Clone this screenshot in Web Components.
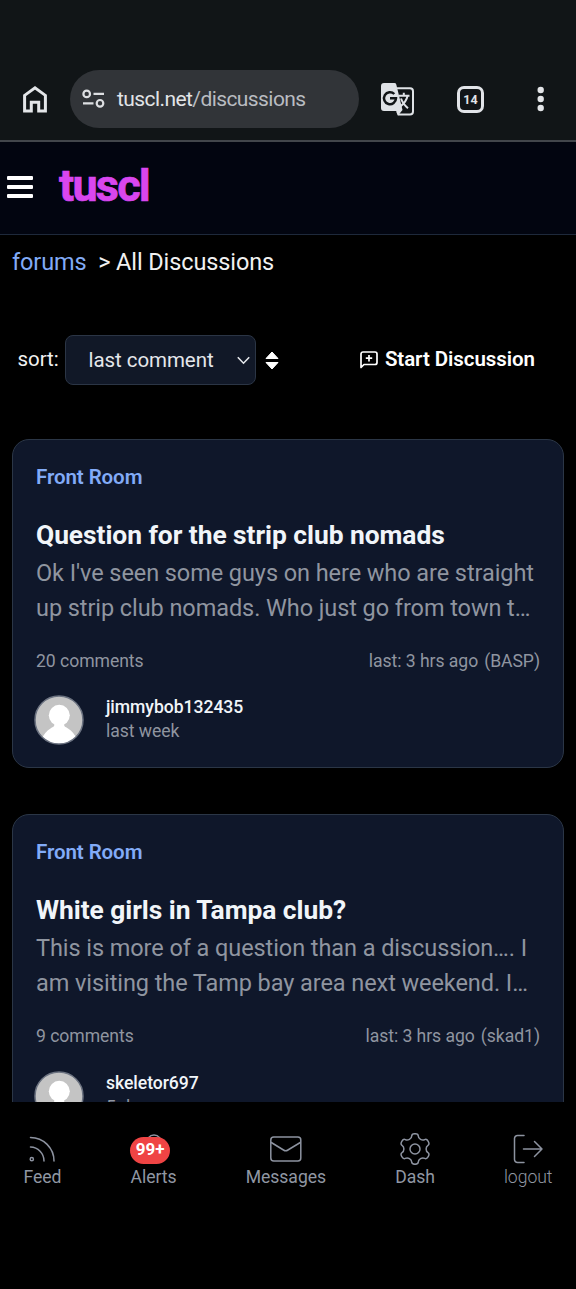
<!DOCTYPE html>
<html lang="en">
<head>
<meta charset="utf-8">
<title>All Discussions</title>
<style>
html,body{margin:0;padding:0;background:#000}
body{width:576px;height:1289px;overflow:hidden;font-family:Roboto,"Liberation Sans",sans-serif}
</style>
</head>
<body>
<phone-screen>
  <browser-bar slot="top"></browser-bar>
  <site-header slot="top"></site-header>
  <bread-crumb></bread-crumb>
  <list-toolbar></list-toolbar>
  <discussion-card>
    <span slot="room">Front Room</span>
    <span slot="title">Question for the strip club nomads</span>
    <span slot="line1">Ok I've seen some guys on here who are straight</span>
    <span slot="line2">up strip club nomads. Who just go from town t…</span>
    <span slot="count">20 comments</span>
    <span slot="last">last: 3 hrs ago</span>
    <span slot="by">(BASP)</span>
    <span slot="author">jimmybob132435</span>
    <span slot="when">last week</span>
  </discussion-card>
  <discussion-card>
    <span slot="room">Front Room</span>
    <span slot="title">White girls in Tampa club?</span>
    <span slot="line1">This is more of a question than a discussion…. I</span>
    <span slot="line2">am visiting the Tamp bay area next weekend. I…</span>
    <span slot="count">9 comments</span>
    <span slot="last">last: 3 hrs ago</span>
    <span slot="by">(skad1)</span>
    <span slot="author">skeletor697</span>
    <span slot="when">5 days ago</span>
  </discussion-card>
  <bottom-nav slot="bottom"></bottom-nav>
</phone-screen>
<script>
const define = (name, html) => customElements.define(name, class extends HTMLElement {
  constructor() {
    super();
    this.attachShadow({mode: 'open'}).innerHTML = html;
  }
});

define('phone-screen', `
<style>
:host{display:flex;flex-direction:column;width:576px;height:1289px;overflow:hidden;background:#000}
main{height:867px;flex:none;overflow:hidden}
</style>
<slot name="top"></slot><main><slot></slot></main><slot name="bottom"></slot>`);

define('browser-bar', `
<style>
:host{display:flex;flex:none;box-sizing:border-box;height:142px;padding:70px 0 12px 23px;align-items:center;background:#111517;border-bottom:2px solid #42464b}
svg{display:block;flex:none}
.pill{display:flex;align-items:center;box-sizing:border-box;width:289px;height:58px;margin-left:23px;padding-left:12px;border-radius:29px;background:#313438}
.url{margin-left:12px;font-size:21px;line-height:30px;letter-spacing:-.58px;color:#e2e4e7;white-space:nowrap}
.url span{color:#b9bcc1}
.tabs{display:flex;align-items:center;justify-content:center;box-sizing:border-box;width:27px;height:27px;margin-left:43px;border:3px solid #e2e4e8;border-radius:7px;color:#e2e4e8;font-size:12.5px;font-weight:700}
</style>
<svg width="24" height="27" viewBox="0 0 24 27" fill="none" stroke="#e3e5e8" stroke-width="3"><path d="M1.6 9.4V25H8.3V16.2H15.7V25H22.4V9.4L12 1.9Z"/></svg>
<div class="pill">
<svg width="23" height="20" viewBox="0 0 23 20" fill="none" stroke="#dddfe2" stroke-width="2.2"><circle cx="4.7" cy="4.9" r="3.3"/><path d="M11.5 4.9H22M1 14.3H11.5"/><circle cx="18" cy="14.3" r="3.3"/></svg>
<div class="url">tuscl.net<span>/discussions</span></div>
</div>
<svg style="margin-left:22px" width="33" height="33" viewBox="0 0 33 33">
<path d="M16 5.3H29a3 3 0 0 1 3 3V28.500a3 3 0 0 1-3 3H17.500L16 28" fill="none" stroke="#dfe2e6" stroke-width="2"/>
<path d="M3 0H13.400a2 2 0 0 1 1.900 1.400L21.500 27 17 32.500 15.700 28H3a3 3 0 0 1-3-3V3a3 3 0 0 1 3-3Z" fill="#dfe2e6"/>
<path d="M13.300 11A6 6 0 1 0 15 15.200H9" fill="none" stroke="#111517" stroke-width="2.500"/>
<path d="M18 12.800H28.500M22.800 9.800V12.800M26.500 13C25.500 18 22.500 21 19.300 23.500M20 15.500C21.500 20 24 22.700 27 25.200" fill="none" stroke="#dfe2e6" stroke-width="2"/></svg>
<div class="tabs">14</div>
<svg style="margin-left:53px" width="8" height="26" viewBox="0 0 8 26" fill="#e3e5e8"><circle cx="3.700" cy="4" r="3.200"/><circle cx="3.700" cy="13" r="3.200"/><circle cx="3.700" cy="22" r="3.200"/></svg>`);

define('site-header', `
<style>
:host{display:flex;flex:none;box-sizing:border-box;height:93px;padding-left:7px;align-items:center;background:#020510;border-bottom:1px solid #1e293b}
.menu{display:grid;gap:5px;width:26px;margin-top:-2px}
.menu i{height:4px;border-radius:1px;background:#fff}
b{margin:-4px 0 0 26px;font-size:45px;line-height:60px;font-weight:700;letter-spacing:-1.800px;color:#d946ef;-webkit-text-stroke:.7px #d946ef}
</style>
<div class="menu"><i></i><i></i><i></i></div><b>tuscl</b>`);

define('bread-crumb', `
<style>
:host{display:flex;height:55px;padding-left:12px;font-size:23.500px;line-height:54px;letter-spacing:-.1px;color:#f1f1f1;white-space:pre}
a{color:#82abf7;margin-right:11.500px}
</style>
<a>forums</a><span>&gt; All Discussions</span>`);

define('list-toolbar', `
<style>
:host{display:flex;align-items:center;height:50px;margin-top:45px;padding:0 41px 0 18px;font-size:20.500px;letter-spacing:-.06px;color:#f1f1f1;white-space:nowrap}
.select{display:flex;align-items:center;justify-content:space-between;box-sizing:border-box;width:191px;height:50px;margin-left:.5px;padding:0 5px 0 22.500px;border:1px solid #2b3545;border-radius:8px;background:#111827;color:#e5e7eb}
.lbl{margin-top:-2px;width:47px;margin-left:-.5px}
.sort{margin-left:9px}
.start{display:flex;align-items:center;margin-left:auto;font-weight:600;color:#fff;margin-top:-1px}
.start svg{margin:1px 6.500px 0 0}
.start span{margin-top:-1px}
</style>
<span class="lbl">sort:</span>
<div class="select"><span>last comment</span><svg width="13" height="9" viewBox="0 0 13 9" fill="none" stroke="#e5e7eb" stroke-width="1.600"><path d="M.8 1.200 6.500 7.200 12.200 1.200"/></svg></div>
<svg class="sort" width="14" height="19" viewBox="0 0 14 19" fill="#fff" stroke="#fff" stroke-width="1" stroke-linejoin="round"><path d="M1 7.500 7 1 13 7.500ZM1 11.500 7 18 13 11.500Z"/></svg>
<div class="start"><svg width="18" height="18" viewBox="0 0 18 18" fill="none" stroke="#fff" stroke-width="1.700" stroke-linejoin="round"><path d="M1 16.500V3a2 2 0 0 1 2-2H15a2 2 0 0 1 2 2V11.500a2 2 0 0 1-2 2H4ZM9 4V10.400M5.800 7.200H12.200"/></svg><span>Start Discussion</span></div>`);

define('discussion-card', `
<style>
:host{display:block;box-sizing:border-box;width:552px;height:329px;margin:54px 12px 46px;padding:23px 23px 22px;border:1px solid #2b3646;border-radius:17px;background:#0f172a;white-space:nowrap}
:host(:last-of-type){margin-top:0}
.room{font-size:20.500px;line-height:28px;font-weight:600;letter-spacing:-.08px;color:#82abf7}
.title{margin-top:25px;font-size:26.400px;line-height:38px;font-weight:700;letter-spacing:-.055px;color:#f1f5f9}
.text{margin-top:2px;font-size:23.500px;line-height:35px;letter-spacing:-.075px;color:#8f95a0}
.text div{height:35px}
.meta{display:flex;justify-content:space-between;margin-top:21px;font-size:17.600px;line-height:28px;letter-spacing:-.05px;color:#8f95a0}
.meta div{display:flex;gap:6px}
.user{display:flex;margin:20px 0 0 -2px;gap:22px;font-size:17.600px;line-height:24px;letter-spacing:-.05px;color:#8f95a0}
.name{font-weight:500;color:#f1f5f9}
svg{display:block}
.who{margin-top:-.2px}
:host(:last-of-type) .who{margin-top:.5px}
:host(:last-of-type) svg{margin-top:.5px}
</style>
<div class="room"><slot name="room"></slot></div>
<div class="title"><slot name="title"></slot></div>
<div class="text"><div><slot name="line1"></slot></div><div><slot name="line2"></slot></div></div>
<div class="meta"><slot name="count"></slot><div><slot name="last"></slot><slot name="by"></slot></div></div>
<div class="user">
<svg width="50" height="50" viewBox="0 0 50 50"><clipPath id="c"><circle cx="25" cy="25" r="24"/></clipPath><circle cx="25" cy="25" r="24" fill="#c4c4c4"/><g clip-path="url(#c)" fill="#fff"><circle cx="25.300" cy="20.300" r="10.500"/><path d="M20.500 28H30C30 32 31 31.500 34 33.500 38 36 41 39.500 42.500 44V50H8V44C9.500 39.500 12.500 36 16.500 33.500 19.500 31.500 20.500 32 20.500 28Z"/></g><circle cx="25" cy="25" r="24" fill="none" stroke="#6b7280" stroke-width="1.500"/></svg>
<div class="who"><div class="name"><slot name="author"></slot></div><div><slot name="when"></slot></div></div>
</div>`);

define('nav-item', `
<style>
:host{display:flex;flex-direction:column;align-items:center;position:relative;font-size:17.600px;line-height:24px;letter-spacing:-.04px;color:#9097a3}
::slotted(svg){display:block;height:32px;width:32px;fill:none;stroke:#8d93a0;stroke-width:1.500;stroke-linecap:round;stroke-linejoin:round;margin:0 -10px}
::slotted(b){position:absolute;left:-.5px;top:4px;width:40px;height:26.500px;border-radius:13.500px;background:#ef4444;color:#fff;font-size:17px;line-height:25px;text-align:center}
</style>
<slot name="icon"></slot><slot></slot><slot name="badge"></slot>`);

define('bottom-nav', `
<style>
:host{display:flex;justify-content:space-between;box-sizing:border-box;flex:none;height:187px;padding:31px 23.500px 0;background:#000}
.thin{font-weight:300}
</style>
<nav-item><svg slot="icon" viewBox="0 0 32 32"><path d="M4.500 4.500A23.500 23.500 0 0 1 28 28M4.500 14A14 14 0 0 1 18 28"/><circle cx="5.800" cy="26.200" r="1.600"/></svg>Feed</nav-item>
<nav-item><svg slot="icon" viewBox="0 0 32 32"><path d="M6 24C8 21 8 18 8 11a8 9 0 0 1 16 0C24 18 24 21 26 24ZM12.500 27a4 4 0 0 0 7 0"/></svg><b slot="badge">99+</b>Alerts</nav-item>
<nav-item><svg slot="icon" viewBox="0 0 32 32"><rect x=".8" y="4" width="30" height="24" rx="3"/><path d="M1.300 9.500 13.500 17a4 4 0 0 0 4.400 0L30.300 9.500"/></svg>Messages</nav-item>
<nav-item><svg slot="icon" viewBox="0 0 32 32"><path id="gear"/><circle cx="16" cy="16" r="5"/></svg>Dash</nav-item>
<nav-item class="thin"><svg slot="icon" viewBox="-1 0 32 32"><path d="M11 2.500H4.500a3 3 0 0 0-3 3V26.500a3 3 0 0 0 3 3H11M10.500 16H29M21.500 8.500 29 16 21.500 23.500"/></svg>logout</nav-item>`);

// Six-toothed gear outline, rounded with quadratic joins.
{
  const pts = [];
  for (let i = 0; i < 6; i++) {
    const a = i * 60 - 90;
    for (const [d, r] of [[-12, 15.6], [12, 15.6], [17, 11.4], [43, 11.4]]) {
      const t = (a + d) * Math.PI / 180;
      pts.push([16 + r * Math.cos(t), 16 + r * Math.sin(t)]);
    }
  }
  const mid = (p, q) => ((p[0] + q[0]) / 2).toFixed(2) + ' ' + ((p[1] + q[1]) / 2).toFixed(2);
  let d = 'M' + mid(pts[pts.length - 1], pts[0]);
  pts.forEach((p, i) => { d += 'Q' + p[0].toFixed(2) + ' ' + p[1].toFixed(2) + ' ' + mid(p, pts[(i + 1) % pts.length]); });
  document.querySelector('bottom-nav').shadowRoot.getElementById('gear').setAttribute('d', d + 'Z');
}
</script>
</body>
</html>
